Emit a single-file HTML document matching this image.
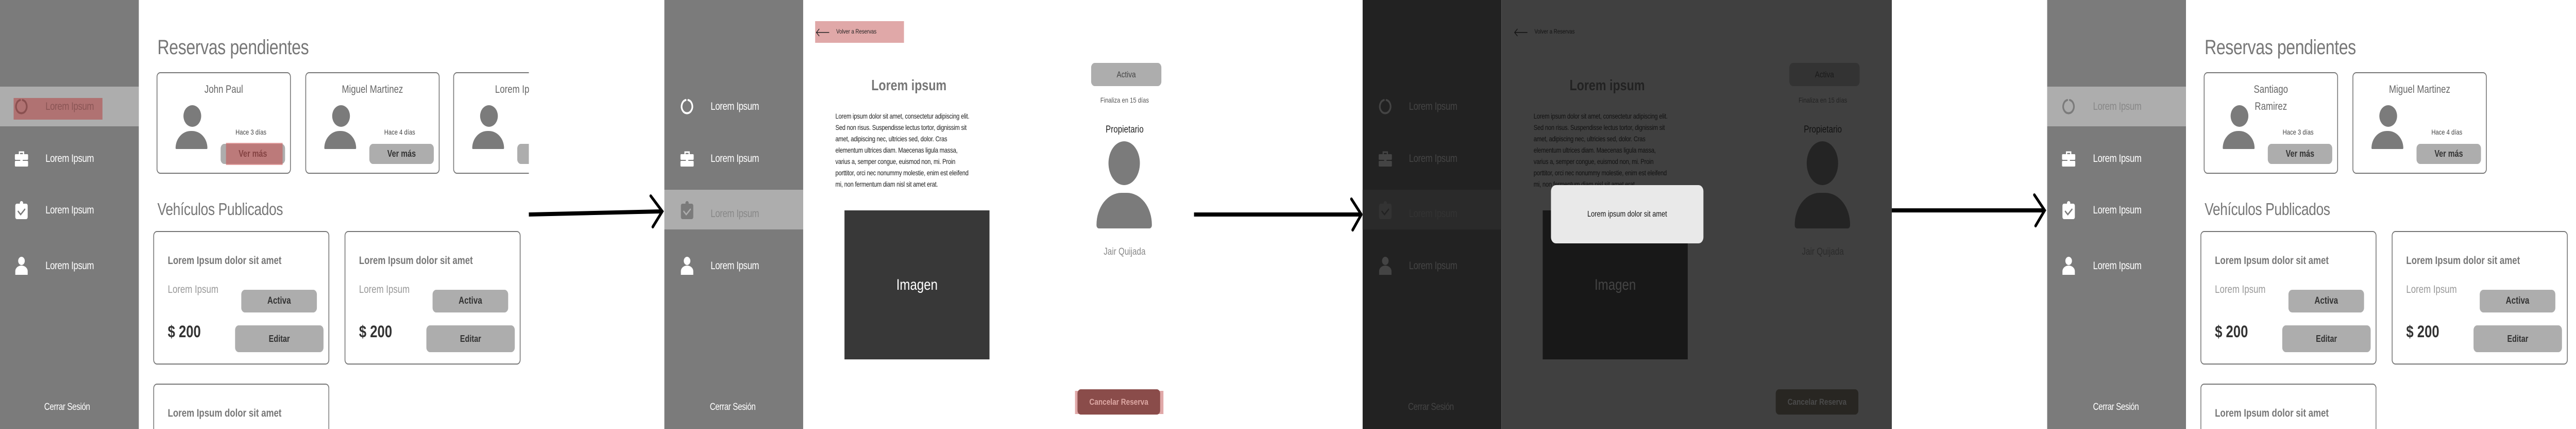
<!DOCTYPE html>
<html><head><meta charset="utf-8">
<style>
*{margin:0;padding:0;box-sizing:border-box}
html,body{width:100%;height:100%;overflow:hidden;background:#fff}
#root{position:absolute;left:0;top:0;width:6235px;height:832px;overflow:hidden;background:#fff;font-family:"Liberation Sans",sans-serif;transform-origin:0 0}
.a{position:absolute}
.fr{position:absolute;top:0;height:832px;overflow:hidden}
.sb{position:absolute;left:0;top:0;width:336px;height:832px;background:#7b7b7b}
.band{position:absolute;left:0;width:336px;height:77px;background:#adadad}
.it{position:absolute;left:110px;font-size:21px;color:#fff;line-height:26px;transform:translateY(-13px);letter-spacing:-0.5px;white-space:nowrap}
.ic{position:absolute;left:34px;width:36px;height:36px;transform:translateY(-18px)}
.cs{position:absolute;left:107px;top:779px;font-size:19px;color:#fff;letter-spacing:-0.5px;white-space:nowrap}
.t1{position:absolute;left:381px;top:70px;font-size:40px;color:#777;letter-spacing:-0.5px;white-space:nowrap}
.t2{position:absolute;left:381px;top:387px;font-size:33px;color:#777;letter-spacing:-0.5px;white-space:nowrap}
.rc{position:absolute;top:140px;width:325px;height:197px;border:2px solid #777;border-radius:9px;background:#fff}
.nm{position:absolute;left:0;right:0;text-align:center;font-size:21px;color:#666;line-height:33px}
.hd{position:absolute;left:63px;top:62px;width:43px;height:42px;border-radius:50%;background:#7b7b7b}
.bd{position:absolute;left:44px;top:112px;width:77px;height:35px;background:#7b7b7b;border-radius:39px 39px 2px 2px/35px 35px 2px 2px}
.hc{position:absolute;left:189px;top:106px;font-size:14px;color:#444;white-space:nowrap}
.vm{position:absolute;left:153px;top:137px;width:156px;height:39px;background:#adadad;border-radius:9px;text-align:center;line-height:39px;font-size:18px;font-weight:bold;color:#333}
.vc{position:absolute;top:448px;width:426px;height:259px;border:2px solid #777;border-radius:9px;background:#fff}
.vt{position:absolute;left:33px;top:44px;font-size:21px;color:#777;font-weight:bold;white-space:nowrap}
.vl{position:absolute;left:33px;top:100px;font-size:21px;color:#999}
.act{position:absolute;left:211px;top:112px;width:183px;height:44px;background:#adadad;border-radius:9px;text-align:center;line-height:44px;font-size:19px;font-weight:bold;color:#333}
.pr{position:absolute;left:33px;top:175px;font-size:32px;font-weight:bold;color:#333}
.ed{position:absolute;left:196px;top:181px;width:214px;height:52px;background:#adadad;border-radius:9px;text-align:center;line-height:52px;font-size:18px;font-weight:bold;color:#333}
.v3{position:absolute;top:744px;width:426px;height:88px;border:2px solid #777;border-bottom:none;border-radius:9px 9px 0 0;background:#fff}
</style></head><body>
<div id="root">
<svg width="0" height="0" style="position:absolute;left:0;top:0">
<defs>
<symbol id="ring" viewBox="0 0 36 36"><path d="M21 5 A13 13 0 1 1 14.5 5" fill="none" stroke="currentColor" stroke-width="4" stroke-linecap="round"/></symbol>
<symbol id="brief" viewBox="0 0 36 36"><path d="M13 9 V5 H23 V9" fill="none" stroke="currentColor" stroke-width="3"/><rect x="2" y="9" width="32" height="11" rx="2" fill="currentColor"/><rect x="2" y="22" width="32" height="11" rx="2" fill="currentColor"/><rect x="15" y="18" width="6" height="6" rx="1" fill="currentColor"/></symbol>
<symbol id="clip" viewBox="0 0 36 36"><rect x="3" y="5" width="30" height="30" rx="4" fill="currentColor"/><circle cx="18" cy="4" r="4" fill="currentColor"/><path d="M10 20 L16 26 L26 16" fill="none" stroke="var(--ck,#7b7b7b)" stroke-width="3" stroke-linecap="round"/></symbol>
<symbol id="pers" viewBox="0 0 36 36"><circle cx="18" cy="8" r="8" fill="currentColor"/><path d="M3 35 V28 A15 11 0 0 1 33 28 V35 Z" fill="currentColor"/></symbol>
</defs></svg>

<!-- FRAME 1 -->
<div class="fr" style="left:0;width:1607px">
<div class="sb">
<div class="band" style="top:168px"></div>
<div class="a" style="left:33px;top:190px;width:215px;height:42px;background:#b07272"></div>
<svg class="ic" style="top:207px;color:#8a5050"><use href="#ring"/></svg><div class="it" style="top:207px;color:#8a5555">Lorem Ipsum</div>
<svg class="ic" style="top:308px;color:#fff"><use href="#brief"/></svg><div class="it" style="top:308px">Lorem Ipsum</div>
<svg class="ic" style="top:408px;color:#fff"><use href="#clip"/></svg><div class="it" style="top:408px">Lorem Ipsum</div>
<svg class="ic" style="top:516px;color:#fff"><use href="#pers"/></svg><div class="it" style="top:516px">Lorem Ipsum</div>
<div class="cs">Cerrar Sesión</div>
</div>
<div class="t1">Reservas pendientes</div>
<div class="a" style="left:376px;top:136px;width:904px;height:210px;overflow:hidden">
 <div class="rc" style="left:3px;top:4px"><div class="nm" style="top:15px">John Paul</div><div class="hd"></div><div class="bd"></div><div class="hc">Hace 3 días</div><div class="vm">Ver más</div><div class="a" style="left:166px;top:135px;width:137px;height:43px;background:rgba(200,80,80,0.55)"></div></div>
 <div class="rc" style="left:363px;top:4px"><div class="nm" style="top:15px">Miguel Martinez</div><div class="hd"></div><div class="bd"></div><div class="hc">Hace 4 días</div><div class="vm">Ver más</div></div>
 <div class="rc" style="left:721px;top:4px"><div class="nm" style="top:15px">Lorem Ipsum</div><div class="hd"></div><div class="bd"></div><div class="hc">Hace 4 días</div><div class="vm">Ver más</div></div>
</div>
<div class="t2">Vehículos Publicados</div>
<div class="vc" style="left:371px"><div class="vt">Lorem Ipsum dolor sit amet</div><div class="vl">Lorem Ipsum</div><div class="act">Activa</div><div class="pr">$ 200</div><div class="ed">Editar</div></div>
<div class="vc" style="left:834px"><div class="vt">Lorem Ipsum dolor sit amet</div><div class="vl">Lorem Ipsum</div><div class="act">Activa</div><div class="pr">$ 200</div><div class="ed">Editar</div></div>
<div class="v3" style="left:371px"><div class="vt">Lorem Ipsum dolor sit amet</div></div>
<svg class="a" style="left:1275px;top:370px" width="332" height="80"><path d="M5 46 L325 40" stroke="#000" stroke-width="8"/><path d="M300 10 L328 40 L305 70" fill="none" stroke="#000" stroke-width="6" stroke-linecap="round"/></svg>
</div>

<!-- FRAME 2 -->
<div class="fr" style="left:1608px;width:1690px">
<div class="sb">
<div class="band" style="top:368px"></div>
<svg class="ic" style="left:37px;top:207px;color:#fff"><use href="#ring"/></svg><div class="it" style="left:112px;top:207px">Lorem Ipsum</div>
<svg class="ic" style="left:37px;top:308px;color:#fff"><use href="#brief"/></svg><div class="it" style="left:112px;top:308px">Lorem Ipsum</div>
<svg class="ic" style="left:37px;top:408px;color:#7b7b7b;--ck:#adadad"><use href="#clip"/></svg><div class="it" style="left:112px;top:415px;color:#888">Lorem Ipsum</div>
<svg class="ic" style="left:37px;top:516px;color:#fff"><use href="#pers"/></svg><div class="it" style="left:112px;top:516px">Lorem Ipsum</div>
<div class="cs" style="left:110px">Cerrar Sesión</div>
</div>
<div class="a" style="left:365px;top:41px;width:215px;height:42px;background:#e0a8a8"></div>
<svg class="a" style="left:365px;top:54px" width="36" height="18"><path d="M34 9 H3 M10 2 L3 9 L10 16" fill="none" stroke="#222" stroke-width="1.5"/></svg>
<div class="a" style="left:416px;top:54px;font-size:12px;color:#222;white-space:nowrap">Volver a Reservas</div>
<div class="a" style="left:492px;top:150px;width:200px;text-align:center;font-size:29px;font-weight:bold;color:#777">Lorem ipsum</div>
<div class="a" style="left:414px;top:214px;font-size:14px;line-height:22px;color:#222;white-space:nowrap;letter-spacing:-0.3px">Lorem ipsum dolor sit amet, consectetur adipiscing elit.<br>Sed non risus. Suspendisse lectus tortor, dignissim sit<br>amet, adipiscing nec, ultricies sed, dolor. Cras<br>elementum ultrices diam. Maecenas ligula massa,<br>varius a, semper congue, euismod non, mi. Proin<br>porttitor, orci nec nonummy molestie, enim est eleifend<br>mi, non fermentum diam nisl sit amet erat.</div>
<div class="a" style="left:436px;top:408px;width:351px;height:289px;background:#383838;color:#fff;font-size:30px;text-align:center;line-height:289px">Imagen</div>
<div class="a" style="left:1033px;top:122px;width:170px;height:45px;background:#adadad;border-radius:9px;text-align:center;line-height:45px;font-size:17px;color:#444">Activa</div>
<div class="a" style="left:1014px;top:186px;width:200px;text-align:center;font-size:14px;color:#555">Finaliza en 15 días</div>
<div class="a" style="left:1014px;top:241px;width:200px;text-align:center;font-size:19px;color:#222">Propietario</div>
<div class="a" style="left:1075px;top:274px;width:76px;height:85px;border-radius:50%;background:#7b7b7b"></div>
<div class="a" style="left:1046px;top:374px;width:134px;height:69px;background:#7b7b7b;border-radius:60px 60px 6px 6px/62px 62px 6px 6px"></div>
<div class="a" style="left:1014px;top:478px;width:200px;text-align:center;font-size:19px;color:#888">Jair Quijada</div>
<div class="a" style="left:994px;top:758px;width:214px;height:45px;background:#e0a8a8"></div>
<div class="a" style="left:1000px;top:755px;width:200px;height:49px;background:#8a4c4a;border-radius:8px;text-align:center;line-height:49px;font-size:17px;font-weight:bold;color:#dca7a3">Cancelar Reserva</div>
<svg class="a" style="left:1280px;top:380px" width="410" height="75"><path d="M2 36 L405 36" stroke="#000" stroke-width="8"/><path d="M383 6 L407 36 L386 66" fill="none" stroke="#000" stroke-width="6" stroke-linecap="round"/></svg>
</div>

<!-- FRAME 3 -->
<div class="fr" style="left:3298px;width:1657px">
<div class="sb" style="background:#222"></div>
<div class="band" style="top:368px;background:#2a2a2a"></div>
<svg class="ic" style="left:37px;top:207px;color:#444"><use href="#ring"/></svg><div class="it" style="left:112px;top:207px;color:#444">Lorem Ipsum</div>
<svg class="ic" style="left:37px;top:308px;color:#444"><use href="#brief"/></svg><div class="it" style="left:112px;top:308px;color:#444">Lorem Ipsum</div>
<svg class="ic" style="left:37px;top:408px;color:#333;--ck:#222"><use href="#clip"/></svg><div class="it" style="left:112px;top:415px;color:#333">Lorem Ipsum</div>
<svg class="ic" style="left:37px;top:516px;color:#444"><use href="#pers"/></svg><div class="it" style="left:112px;top:516px;color:#444">Lorem Ipsum</div>
<div class="cs" style="left:110px;color:#444">Cerrar Sesión</div>
<div class="a" style="left:336px;top:0;width:945px;height:832px;background:#404040"></div>
<svg class="a" style="left:365px;top:54px" width="36" height="18"><path d="M34 9 H3 M10 2 L3 9 L10 16" fill="none" stroke="#111" stroke-width="1.5"/></svg>
<div class="a" style="left:416px;top:54px;font-size:12px;color:#111;white-space:nowrap">Volver a Reservas</div>
<div class="a" style="left:492px;top:150px;width:200px;text-align:center;font-size:29px;font-weight:bold;color:#222">Lorem ipsum</div>
<div class="a" style="left:414px;top:214px;font-size:14px;line-height:22px;color:#111;white-space:nowrap;letter-spacing:-0.3px">Lorem ipsum dolor sit amet, consectetur adipiscing elit.<br>Sed non risus. Suspendisse lectus tortor, dignissim sit<br>amet, adipiscing nec, ultricies sed, dolor. Cras<br>elementum ultrices diam. Maecenas ligula massa,<br>varius a, semper congue, euismod non, mi. Proin<br>porttitor, orci nec nonummy molestie, enim est eleifend<br>mi, non fermentum diam nisl sit amet erat.</div>
<div class="a" style="left:436px;top:408px;width:351px;height:289px;background:#181818;color:#444;font-size:30px;text-align:center;line-height:289px">Imagen</div>
<div class="a" style="left:1033px;top:122px;width:170px;height:45px;background:#333;border-radius:9px;text-align:center;line-height:45px;font-size:17px;color:#1a1a1a">Activa</div>
<div class="a" style="left:1014px;top:186px;width:200px;text-align:center;font-size:14px;color:#222">Finaliza en 15 días</div>
<div class="a" style="left:1014px;top:241px;width:200px;text-align:center;font-size:19px;color:#111">Propietario</div>
<div class="a" style="left:1075px;top:274px;width:76px;height:85px;border-radius:50%;background:#242424"></div>
<div class="a" style="left:1046px;top:374px;width:134px;height:69px;background:#242424;border-radius:60px 60px 6px 6px/62px 62px 6px 6px"></div>
<div class="a" style="left:1014px;top:478px;width:200px;text-align:center;font-size:19px;color:#2a2a2a">Jair Quijada</div>
<div class="a" style="left:1000px;top:755px;width:200px;height:49px;background:#282622;border-radius:8px;text-align:center;line-height:49px;font-size:17px;font-weight:bold;color:#4a4a4a">Cancelar Reserva</div>
<div class="a" style="left:456px;top:359px;width:369px;height:113px;background:#e9e9e9;border-radius:12px;text-align:center;line-height:113px;font-size:16px;color:#111">Lorem ipsum dolor sit amet</div>
<svg class="a" style="left:1281px;top:372px" width="376" height="75"><path d="M0 36 L368 36" stroke="#000" stroke-width="8"/><path d="M345 6 L370 36 L348 66" fill="none" stroke="#000" stroke-width="6" stroke-linecap="round"/></svg>
</div>

<!-- FRAME 4 -->
<div class="fr" style="left:4955px;width:1280px">
<div class="sb">
<div class="band" style="top:168px"></div>
<svg class="ic" style="top:207px;color:#7b7b7b"><use href="#ring"/></svg><div class="it" style="left:111px;top:207px;color:#888">Lorem Ipsum</div>
<svg class="ic" style="top:308px;color:#fff"><use href="#brief"/></svg><div class="it" style="left:111px;top:308px">Lorem Ipsum</div>
<svg class="ic" style="top:408px;color:#fff"><use href="#clip"/></svg><div class="it" style="left:111px;top:408px">Lorem Ipsum</div>
<svg class="ic" style="top:516px;color:#fff"><use href="#pers"/></svg><div class="it" style="left:111px;top:516px">Lorem Ipsum</div>
<div class="cs" style="left:111px">Cerrar Sesión</div>
</div>
<div class="t1">Reservas pendientes</div>
<div class="rc" style="left:379px"><div class="nm" style="top:15px">Santiago<br>Ramirez</div><div class="hd"></div><div class="bd"></div><div class="hc">Hace 3 días</div><div class="vm">Ver más</div></div>
<div class="rc" style="left:739px"><div class="nm" style="top:15px">Miguel Martinez</div><div class="hd"></div><div class="bd"></div><div class="hc">Hace 4 días</div><div class="vm">Ver más</div></div>
<div class="t2">Vehículos Publicados</div>
<div class="vc" style="left:371px"><div class="vt">Lorem Ipsum dolor sit amet</div><div class="vl">Lorem Ipsum</div><div class="act">Activa</div><div class="pr">$ 200</div><div class="ed">Editar</div></div>
<div class="vc" style="left:834px"><div class="vt">Lorem Ipsum dolor sit amet</div><div class="vl">Lorem Ipsum</div><div class="act">Activa</div><div class="pr">$ 200</div><div class="ed">Editar</div></div>
<div class="v3" style="left:371px"><div class="vt">Lorem Ipsum dolor sit amet</div></div>
</div>
</div>
<script>
(function(){
  function fit(){
    var w=window.innerWidth||document.documentElement.clientWidth||6235;
    var h=window.innerHeight||document.documentElement.clientHeight||832;
    var sx=w/6235, sy=h/832;
    var r=document.getElementById('root');
    if(Math.abs(sx-1)<0.001&&Math.abs(sy-1)<0.001){r.style.transform='';return;}
    r.style.transform='scale('+sx+','+sy+')';
  }
  fit();
  window.addEventListener('resize',fit);
})();
</script>
</body></html>
